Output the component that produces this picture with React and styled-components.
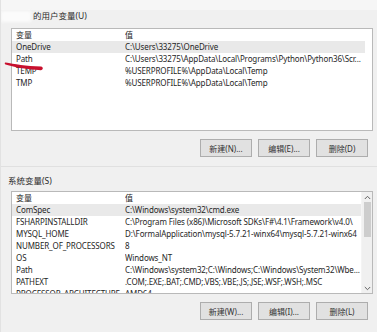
import React from "react";
import styled, { createGlobalStyle } from "styled-components";

const Global = createGlobalStyle`
  html, body { margin: 0; padding: 0; background: #f0f0f0; }
  body { font-family: "Noto Sans", "Noto Sans CJK SC", sans-serif; }
`;

const Page = styled.div`
  position: relative;
  width: 377px;
  height: 332px;
  overflow: hidden;
  background: #f0f0f0;
  color: #262626;
  font-size: 8px;
  display: flex;
  flex-direction: column;
  box-sizing: border-box;
  border-left: 1px solid #e2e2e2;
`;

const TopStrip = styled.div`
  height: 10px;
  background: #f6f6f6;
  flex: none;
`;

const GroupLabel = styled.div`
  height: 12px;
  line-height: 12px;
  padding-left: ${(p) => p.$indent}px;
  margin-top: ${(p) => p.$top || 0}px;
  display: flex;
  align-items: center;
  font-size: 8.5px;
  color: #2a2a2a;
  flex: none;
`;

const Redacted = styled.span`
  display: inline-block;
  width: 30px;
  height: 11px;
  margin-left: -32px;
  margin-right: 2px;
  background: #fbfbfb;
  filter: blur(1.5px);
`;

const ListBox = styled.div`
  position: relative;
  margin: ${(p) => p.$top}px 4px 0 10px;
  height: ${(p) => p.$h}px;
  flex: none;
  background: #ffffff;
  border: 1px solid #b9b9b9;
  box-sizing: border-box;
  overflow: hidden;
  display: flex;
`;

const Rows = styled.div`
  flex: 1;
  min-width: 0;
  display: flex;
  flex-direction: column;
  overflow: hidden;
`;

const Row = styled.div`
  display: flex;
  height: 12px;
  line-height: 12px;
  width: 353px;
  background: ${(p) => (p.$sel ? "#e9e9e9" : "transparent")};
  white-space: nowrap;
  flex: none;
  letter-spacing: -0.12px;
`;

const NameCell = styled.div`
  width: 109px;
  padding-left: 4px;
  flex: none;
  overflow: hidden;
  white-space: nowrap;
`;

const ValueCell = styled.div`
  flex: 1;
  min-width: 0;
  overflow: hidden;
  white-space: nowrap;
`;

const Scrollbar = styled.div`
  width: 10px;
  flex: none;
  background: #f0f0f0;
  display: flex;
  flex-direction: column;
  align-items: center;
  border-left: 1px solid #f4f4f4;
`;

const Arrow = styled.div`
  height: 10px;
  width: 10px;
  display: flex;
  align-items: center;
  justify-content: center;
  flex: none;
`;

const Thumb = styled.div`
  width: 7px;
  height: 35px;
  background: #cdcdcd;
  flex: none;
`;

const Track = styled.div`
  flex: 1;
`;

const ButtonRow = styled.div`
  display: flex;
  justify-content: flex-end;
  gap: 6px;
  margin-top: ${(p) => p.$top}px;
  padding-right: 9px;
  flex: none;
`;

const Button = styled.div`
  width: 52px;
  height: 18px;
  box-sizing: border-box;
  background: #e1e1e1;
  border: 1px solid #adadad;
  display: flex;
  align-items: center;
  justify-content: center;
  font-size: 8px;
  color: #333;
`;

const Separator = styled.div`
  height: 1px;
  background: #e0e0e0;
  margin-top: ${(p) => p.$top}px;
  flex: none;
`;

const Scribble = styled.svg`
  position: absolute;
  left: 3px;
  top: 60px;
  width: 40px;
  height: 12px;
  pointer-events: none;
`;

const userVars = [
  ["OneDrive", "C:\\Users\\33275\\OneDrive", true],
  ["Path", "C:\\Users\\33275\\AppData\\Local\\Programs\\Python\\Python36\\Scr..."],
  ["TEMP", "%USERPROFILE%\\AppData\\Local\\Temp"],
  ["TMP", "%USERPROFILE%\\AppData\\Local\\Temp"],
];

const sysVars = [
  ["ComSpec", "C:\\Windows\\system32\\cmd.exe", true],
  ["FSHARPINSTALLDIR", "C:\\Program Files (x86)\\Microsoft SDKs\\F#\\4.1\\Framework\\v4.0\\"],
  ["MYSQL_HOME", "D:\\FormalApplication\\mysql-5.7.21-winx64\\mysql-5.7.21-winx64"],
  ["NUMBER_OF_PROCESSORS", "8"],
  ["OS", "Windows_NT"],
  ["Path", "C:\\Windows\\system32;C:\\Windows;C:\\Windows\\System32\\Wbe..."],
  ["PATHEXT", ".COM;.EXE;.BAT;.CMD;.VBS;.VBE;.JS;.JSE;.WSF;.WSH;.MSC"],
  ["PROCESSOR_ARCHITECTURE", "AMD64"],
];

function VarList({ items, top, h, scroll }) {
  return (
    <ListBox $top={top} $h={h}>
      <Rows>
        <Row>
          <NameCell>变量</NameCell>
          <ValueCell>值</ValueCell>
        </Row>
        {items.map(([n, v, sel]) => (
          <Row key={n} $sel={sel}>
            <NameCell>{n}</NameCell>
            <ValueCell>{v}</ValueCell>
          </Row>
        ))}
      </Rows>
      {scroll && (
        <Scrollbar>
          <Arrow>
            <svg width="7" height="5" viewBox="0 0 7 5">
              <path d="M0.8 4 L3.5 1.3 L6.2 4" fill="none" stroke="#606060" strokeWidth="1" />
            </svg>
          </Arrow>
          <Thumb />
          <Track />
          <Arrow>
            <svg width="7" height="5" viewBox="0 0 7 5">
              <path d="M0.8 1 L3.5 3.7 L6.2 1" fill="none" stroke="#606060" strokeWidth="1" />
            </svg>
          </Arrow>
        </Scrollbar>
      )}
    </ListBox>
  );
}

export default function App() {
  return (
    <>
      <Global />
      <Page>
        <TopStrip />
        <GroupLabel $indent={32}>
          <Redacted />
          的用户变量(U)
        </GroupLabel>
        <VarList items={userVars} top={6} h={103} />
        <ButtonRow $top={8}>
          <Button>新建(N)...</Button>
          <Button>编辑(E)...</Button>
          <Button>删除(D)</Button>
        </ButtonRow>
        <Separator $top={9} />
        <GroupLabel $indent={7} $top={8}>系统变量(S)</GroupLabel>
        <VarList items={sysVars} top={4} h={103} scroll />
        <ButtonRow $top={8}>
          <Button>新建(W)...</Button>
          <Button>编辑(I)...</Button>
          <Button>删除(L)</Button>
        </ButtonRow>
        <Scribble viewBox="0 0 40 12">
          <path
            d="M1.5 2.5 C 10 4, 22 6, 37 6.6 C 39.5 6.8, 39.5 10.4, 36.5 10.2 C 24 9.6, 11 7.5, 1.5 4.6 C 0.5 4.2, 0.5 2.4, 1.5 2.5 Z"
            fill="#c8102e"
          />
        </Scribble>
      </Page>
    </>
  );
}
